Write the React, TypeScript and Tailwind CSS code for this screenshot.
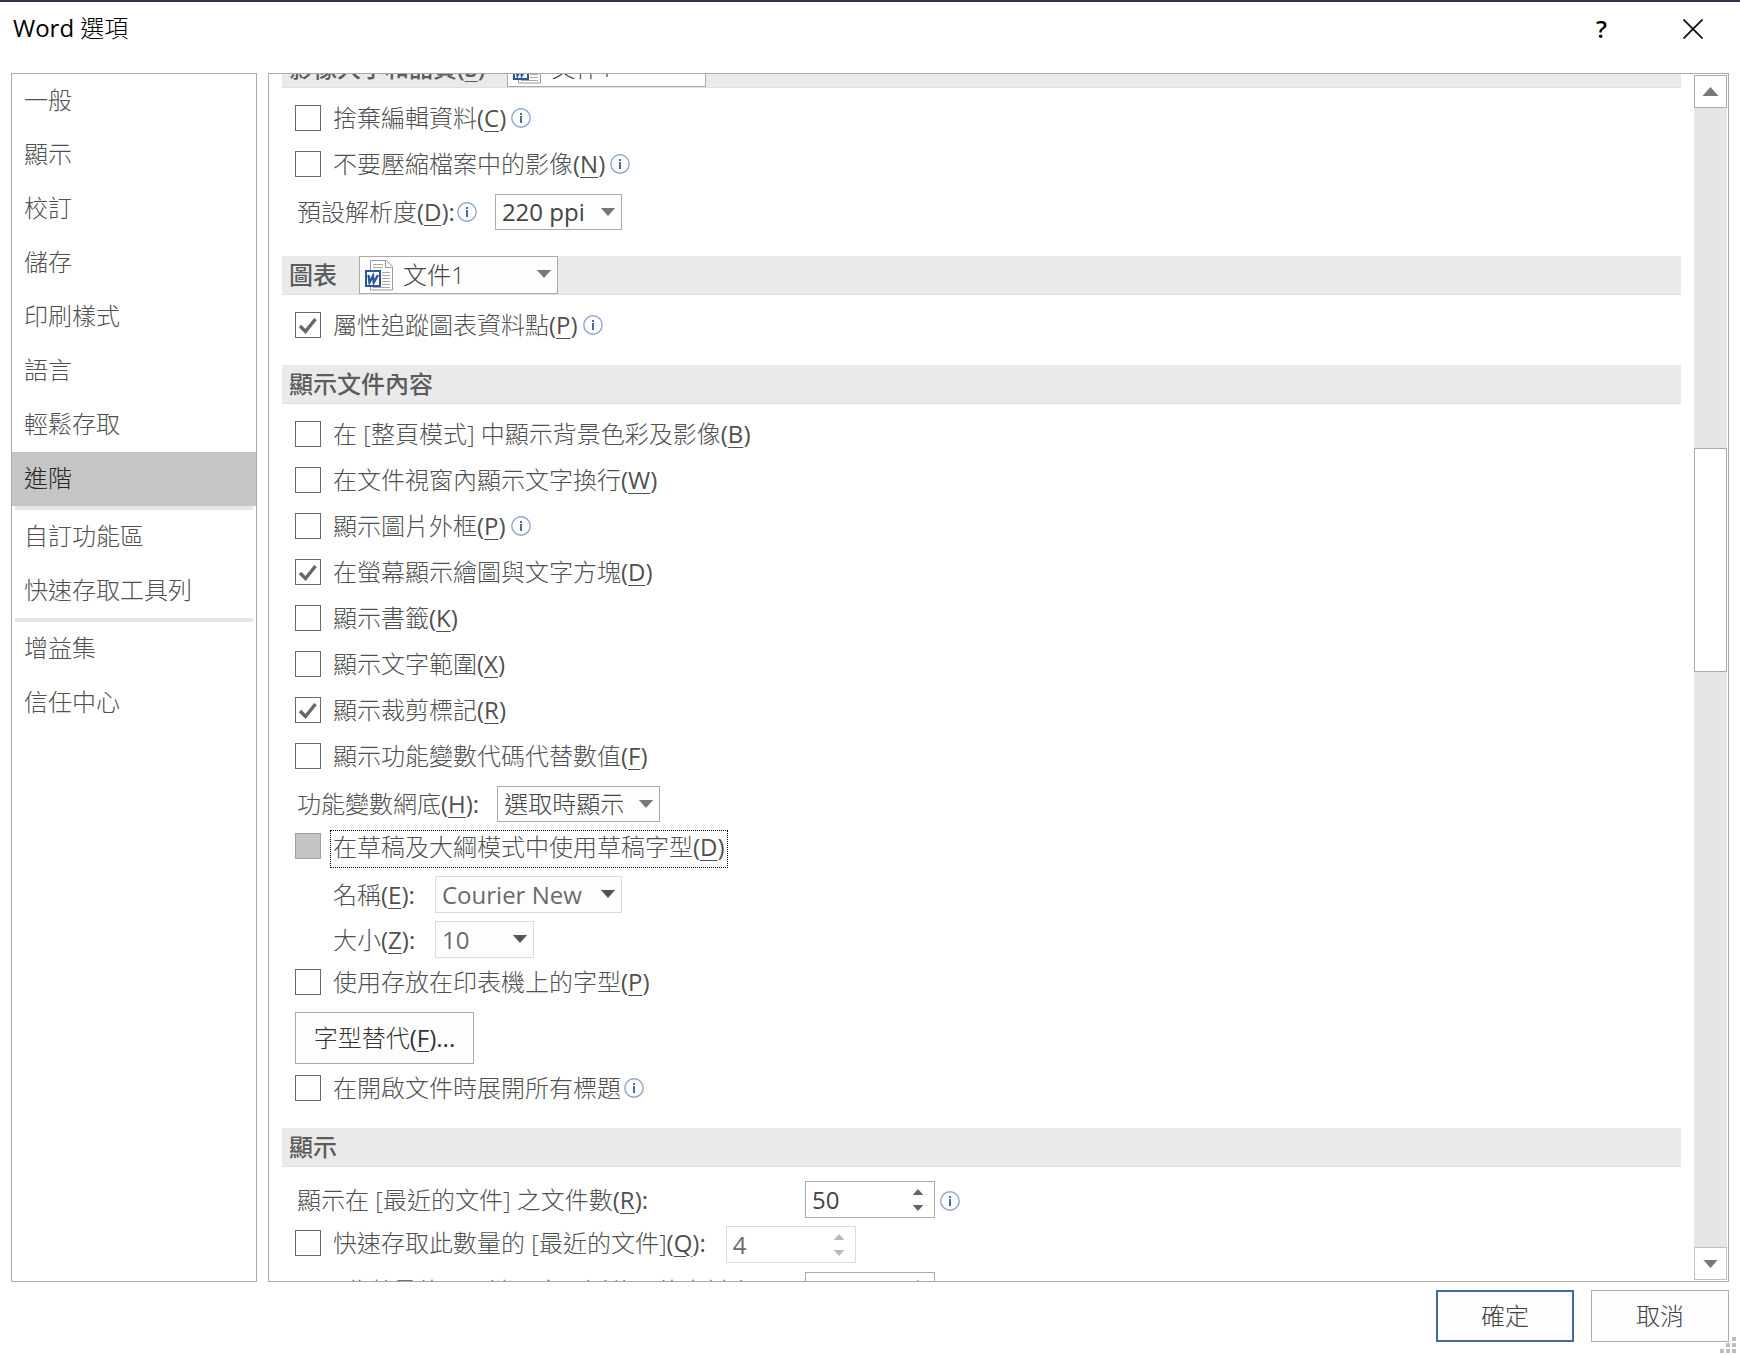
import type { ReactNode } from "react";

const NAV_GROUPS = [
  ["一般", "顯示", "校訂", "儲存", "印刷樣式", "語言", "輕鬆存取", "進階"],
  ["自訂功能區", "快速存取工具列"],
  ["增益集", "信任中心"],
];

// Renders "文字(X)" with the access key underlined.
function Label({ text, accel, tail = "", bold = false }: { text: string; accel?: string; tail?: string; bold?: boolean }) {
  return (
    <span className="whitespace-nowrap">
      {text}
      <span className={bold ? "font-semibold" : "font-normal"}>
        {accel ? (
          <>
            (<span className="underline decoration-1 underline-offset-4">{accel}</span>)
          </>
        ) : null}
        {tail}
      </span>
    </span>
  );
}

function Info() {
  return (
    <svg viewBox="0 0 20 20" className="size-5 shrink-0" role="img" aria-label="資訊">
      <circle cx="10" cy="10" r="9.2" fill="#fff" stroke="#8ea6d0" strokeWidth="1.4" />
      <rect x="9" y="5" width="2" height="2" fill="#4a6c9b" />
      <rect x="9" y="8" width="2" height="7" fill="#4a6c9b" />
    </svg>
  );
}

function Arrow({ className }: { className: string }) {
  return (
    <svg viewBox="0 0 16 9" className={className} fill="currentColor" aria-hidden="true">
      <path d="M0 0h16L8 9z" />
    </svg>
  );
}

function WordIcon() {
  return (
    <svg viewBox="0 0 28 31" className="h-[31px] w-7" aria-hidden="true">
      <path d="M5.500.5h16l6 6v23.500h-22z" fill="#fff" stroke="#9a9a9a" />
      <path d="M20.500.5v7h7" fill="none" stroke="#9a9a9a" />
      <path d="M8 4.500h10M8 7.500h10M17 12.500h8M17 15.500h8M17 18.500h8M17 21.500h8M17 24.500h8M8 27.500h17" stroke="#a8a8a8" />
      <rect y="10" width="16" height="17" fill="#2b579a" />
      <rect x="2" y="12" width="12" height="13" fill="#fff" />
      <path d="M3.500 15l1 7.500 3.500-6.500.8 6.500L13 15" fill="none" stroke="#2b579a" strokeWidth="2.4" />
    </svg>
  );
}

function CheckRow({
  text,
  accel,
  tail,
  checked = false,
  info = false,
  className = "h-[46px]",
  children,
}: {
  text: string;
  accel?: string;
  tail?: string;
  checked?: boolean;
  info?: boolean;
  className?: string;
  children?: ReactNode;
}) {
  return (
    <div className={`flex items-center pl-[13px] ${className}`}>
      <label className="flex items-center gap-3">
        <span className="grid size-[26px] shrink-0 place-items-center">
          <input
            type="checkbox"
            defaultChecked={checked}
            className="peer col-start-1 row-start-1 size-[26px] appearance-none border border-[#6a6a6a] bg-white"
          />
          <svg
            viewBox="0 0 26 26"
            className="pointer-events-none col-start-1 row-start-1 hidden size-[26px] peer-checked:block"
            aria-hidden="true"
          >
            <path d="M5 14l5.500 5.500L20.500 7" fill="none" stroke="#666" strokeWidth="3.4" />
          </svg>
        </span>
        <Label text={text} accel={accel} tail={tail} />
      </label>
      {info ? (
        <span className={accel ? "ml-[5px] flex" : "ml-[3px] flex"}>
          <Info />
        </span>
      ) : null}
      {children}
    </div>
  );
}

function Combo({
  id,
  value,
  label,
  className,
  muted = false,
  icon = false,
}: {
  id: string;
  value: string;
  label?: string;
  className: string;
  muted?: boolean;
  icon?: boolean;
}) {
  return (
    <span className={`relative block shrink-0 ${className}`}>
      <select
        id={id}
        aria-label={label}
        defaultValue={value}
        className={`block size-full appearance-none border bg-[#fdfdfd] leading-8 ${icon ? "pl-[43px]" : "pl-[6px]"} ${
          muted ? "border-[#dcdcdc] text-[#6a6a6a]" : "border-[#ababab] text-[#444]"
        }`}
      >
        <option>{value}</option>
      </select>
      {icon ? (
        <span className="pointer-events-none absolute top-1 left-[6px]">
          <WordIcon />
        </span>
      ) : null}
      <Arrow
        className={`pointer-events-none absolute top-[14px] right-[6px] h-2 w-4 ${muted ? "text-[#555]" : "text-[#777]"}`}
      />
    </span>
  );
}

function Spinner({ id, value, label, muted = false }: { id: string; value: string; label?: string; muted?: boolean }) {
  return (
    <span
      className={`flex h-[37px] w-[130px] shrink-0 items-center border bg-white pr-[10px] pl-[6px] font-normal ${
        muted ? "border-[#dcdcdc] text-[#6a6a6a]" : "border-[#ababab] text-[#444]"
      }`}
    >
      <input id={id} aria-label={label} defaultValue={value} inputMode="numeric" className="w-full min-w-0 bg-transparent outline-none" />
      <span className={`flex flex-col gap-[10px] ${muted ? "text-[#b8b8b8]" : "text-[#666]"}`}>
        <button type="button" aria-label="增加" className="block">
          <Arrow className="h-[6px] w-3 rotate-180" />
        </button>
        <button type="button" aria-label="減少" className="block">
          <Arrow className="h-[6px] w-3" />
        </button>
      </span>
    </span>
  );
}

function Section({ title, accel, combo, children }: { title: string; accel?: string; combo?: ReactNode; children: ReactNode }) {
  return (
    <section className="pb-[17px]">
      <div className="mb-[7px] flex h-[39px] items-center gap-[22px] border-b border-[#e0e0e0] bg-[#eaeaea] pl-[7px]">
        <h2 className="font-medium text-[#5c5c5c]">
          <Label text={title} accel={accel} bold />
        </h2>
        {combo}
      </div>
      {children}
    </section>
  );
}

function Sidebar() {
  return (
    <nav className="w-[246px] shrink-0 border border-[#ababab]">
      {NAV_GROUPS.map((group, i) => (
        <div key={group[0]}>
          {i > 0 ? <hr className="mx-[3px] h-1 border-0 bg-[#e6e6e6]" /> : null}
          {group.map((item) => (
            <button
              key={item}
              type="button"
              className={`flex h-[54px] w-full items-center pb-[2px] pl-3 ${item === "進階" ? "bg-[#c5c5c5] text-[#262626]" : ""}`}
            >
              {item}
            </button>
          ))}
        </div>
      ))}
    </nav>
  );
}

function ScrollBar() {
  return (
    <div className="m-px flex w-[33px] shrink-0 flex-col bg-[#e6e6e6]">
      <button type="button" aria-label="向上捲動" className="grid h-[33px] place-items-center border border-[#ababab] bg-white text-[#777]">
        <Arrow className="h-[9px] w-[17px] rotate-180" />
      </button>
      <div className="flex flex-1 flex-col">
        <div className="grow-[340]" />
        <div className="grow-[222] border border-[#ababab] bg-white" />
        <div className="grow-[576]" />
      </div>
      <button type="button" aria-label="向下捲動" className="grid h-[33px] place-items-center border border-[#c0c0c0] bg-white text-[#777]">
        <Arrow className="h-2 w-[15px]" />
      </button>
    </div>
  );
}

export default function App() {
  return (
    <div className="flex h-screen flex-col border-t-2 border-[#2f3150] bg-white font-['Open_Sans','Noto_Sans_CJK_TC',sans-serif] text-2xl font-light text-[#505050]">
      <header className="flex h-[71px] shrink-0 items-start justify-between pt-3 pr-8 pl-[13px] text-black">
        <h1 className="leading-7">
          <span className="font-normal">Word</span> 選項
        </h1>
        <div className="flex gap-[71px]">
          <button type="button" aria-label="說明" className="leading-[30px] font-semibold">
            ?
          </button>
          <button type="button" aria-label="關閉" className="grid size-[30px] place-items-center">
            <svg viewBox="0 0 20 20" className="size-5" stroke="#111" strokeWidth="1.8" aria-hidden="true">
              <path d="M.5.5l19 19M19.500.5l-19 19" />
            </svg>
          </button>
        </div>
      </header>

      <main className="flex min-h-0 flex-1 gap-[11px] px-[11px]">
        <Sidebar />
        <div className="flex min-w-0 flex-1 overflow-hidden border border-[#ababab]">
          {/* scrolled part-way down, so the first heading is cut by the frame */}
          <div className="-mt-[25px] min-w-0 flex-1 pr-3 pl-[13px]">
            <Section
              title="影像大小和品質"
              accel="S"
              combo={<Combo id="image-doc" label="影像文件" value="文件1" icon className="h-[38px] w-[199px]" />}
            >
              <CheckRow text="捨棄編輯資料" accel="C" info />
              <CheckRow text="不要壓縮檔案中的影像" accel="N" info />
              <div className="mb-[2px] flex h-[50px] items-center pl-[15px]">
                <label htmlFor="ppi">
                  <Label text="預設解析度" accel="D" tail=":" />
                </label>
                <span className="ml-[2px] flex">
                  <Info />
                </span>
                <Combo id="ppi" value="220 ppi" className="ml-[18px] h-9 w-[127px] font-normal" />
              </div>
            </Section>

            <Section title="圖表" combo={<Combo id="chart-doc" label="圖表文件" value="文件1" icon className="h-[38px] w-[199px]" />}>
              <CheckRow text="屬性追蹤圖表資料點" accel="P" checked info />
            </Section>

            <Section title="顯示文件內容">
              <CheckRow text="在 [整頁模式] 中顯示背景色彩及影像" accel="B" />
              <CheckRow text="在文件視窗內顯示文字換行" accel="W" />
              <CheckRow text="顯示圖片外框" accel="P" info />
              <CheckRow text="在螢幕顯示繪圖與文字方塊" accel="D" checked />
              <CheckRow text="顯示書籤" accel="K" />
              <CheckRow text="顯示文字範圍" accel="X" />
              <CheckRow text="顯示裁剪標記" accel="R" checked />
              <CheckRow text="顯示功能變數代碼代替數值" accel="F" />
              <div className="flex h-[50px] items-center pl-[15px]">
                <label htmlFor="shading">
                  <Label text="功能變數網底" accel="H" tail=":" />
                </label>
                <Combo id="shading" value="選取時顯示" className="ml-[18px] h-9 w-[163px]" />
              </div>
              <div className="flex pt-px pl-[13px]">
                <label className="flex items-start gap-[9px]">
                  <input type="checkbox" className="mt-[3px] size-[26px] appearance-none border border-[#a0a0a0] bg-[#c4c4c4]" />
                  <span className="h-[38px] border border-dotted border-black px-[2px] leading-8">
                    <Label text="在草稿及大綱模式中使用草稿字型" accel="D" />
                  </span>
                </label>
              </div>
              <div className="flex flex-col gap-2 py-2 pl-[51px]">
                <div className="flex items-center">
                  <label htmlFor="font-name" className="w-[102px]">
                    <Label text="名稱" accel="E" tail=":" />
                  </label>
                  <Combo id="font-name" value="Courier New" muted className="h-[37px] w-[187px] font-normal" />
                </div>
                <div className="flex items-center">
                  <label htmlFor="font-size" className="w-[102px]">
                    <Label text="大小" accel="Z" tail=":" />
                  </label>
                  <Combo id="font-size" value="10" muted className="h-[37px] w-[99px] font-normal" />
                </div>
              </div>
              <CheckRow text="使用存放在印表機上的字型" accel="P" className="h-8" />
              <button
                type="button"
                className="mt-[14px] mb-px ml-[13px] block h-[52px] w-[179px] border border-[#ababab] bg-[#fdfdfd] text-[#333]"
              >
                <Label text="字型替代" accel="F" tail="..." />
              </button>
              <CheckRow text="在開啟文件時展開所有標題" info />
            </Section>

            <Section title="顯示">
              <div className="pt-[7px]">
                <div className="flex items-center pb-1 pl-[15px]">
                  <label htmlFor="recent-docs" className="w-[508px]">
                    <Label text="顯示在 [最近的文件] 之文件數" accel="R" tail=":" />
                  </label>
                  <Spinner id="recent-docs" value="50" />
                  <span className="ml-[5px] flex pt-[2px]">
                    <Info />
                  </span>
                </div>
                <CheckRow text="快速存取此數量的 [最近的文件]" accel="Q" tail=":" className="h-[41px] gap-5">
                  <span className="pt-1">
                    <Spinner id="quick-docs" label="快速存取數量" value="4" muted />
                  </span>
                </CheckRow>
                <div className="flex items-center pt-[9px] pl-[15px]">
                  <label htmlFor="recent-folders" className="w-[508px]">
                    <Label text="顯示此數量的已取消固定最近使用的資料夾" accel="F" tail=":" />
                  </label>
                  <Spinner id="recent-folders" value="50" />
                </div>
              </div>
            </Section>
          </div>
          <ScrollBar />
        </div>
      </main>

      <footer className="flex shrink-0 justify-end pt-2 pr-1 pb-1">
        <div className="flex gap-[17px] pb-[11px]">
          <button type="button" className="h-[52px] w-[138px] border-2 border-[#4169aa] bg-[#fdfdfd] text-[#444]">
            確定
          </button>
          <button type="button" className="h-[52px] w-[138px] border border-[#ababab] bg-[#fdfdfd] text-[#444]">
            取消
          </button>
        </div>
        <svg viewBox="0 0 16 16" className="-ml-[9px] size-4 self-end" fill="#bdbdbd" aria-hidden="true">
          <path d="M12 0h4v4h-4zM6 6h4v4H6zM12 6h4v4h-4zM0 12h4v4H0zM6 12h4v4H6zM12 12h4v4h-4z" />
        </svg>
      </footer>
    </div>
  );
}
